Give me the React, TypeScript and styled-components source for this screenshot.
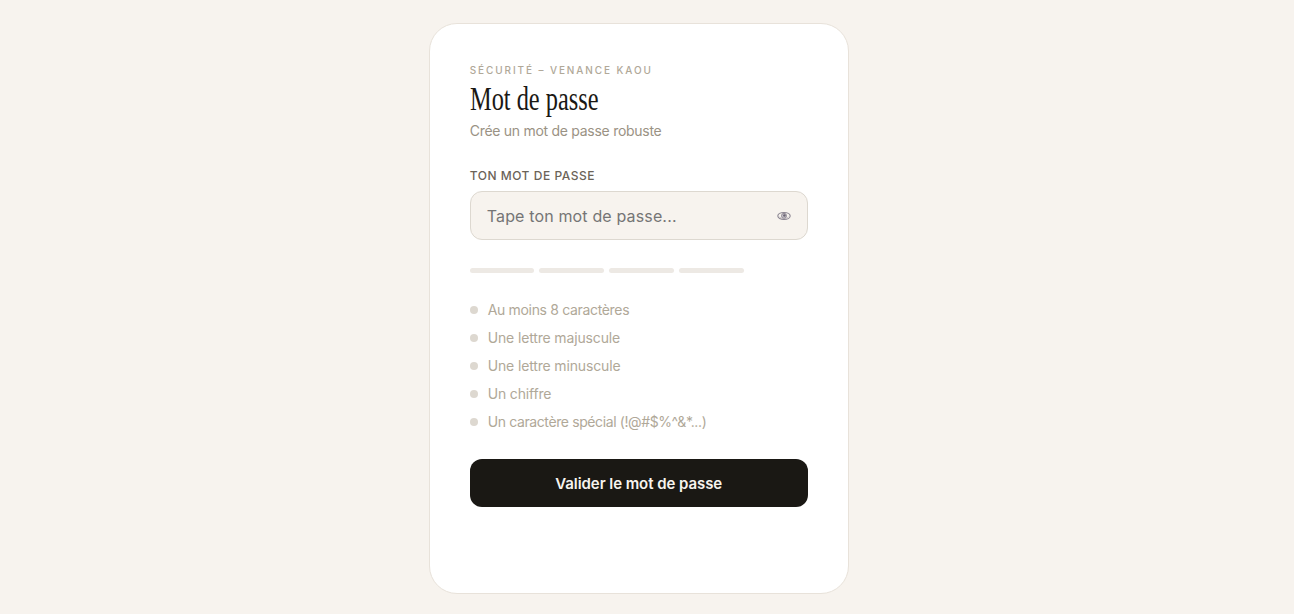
import React, { useState, ChangeEvent } from "react";
import styled, { createGlobalStyle } from "styled-components";

const RULES = [
  { label: "Au moins 8 caractères", spacing: -0.33, test: (v: string) => v.length >= 8 },
  { label: "Une lettre majuscule", spacing: -0.15, test: (v: string) => /[A-Z]/.test(v) },
  { label: "Une lettre minuscule", spacing: -0.15, test: (v: string) => /[a-z]/.test(v) },
  { label: "Un chiffre", spacing: -0.17, test: (v: string) => /[0-9]/.test(v) },
  {
    label: "Un caractère spécial (!@#$%^&*...)",
    spacing: -0.39,
    test: (v: string) => /[^A-Za-z0-9]/.test(v),
  },
];

const LEVELS = [1, 2, 4, 5];

function App() {
  const [password, setPassword] = useState<string>("");
  const [visible, setVisible] = useState<boolean>(false);

  const score = RULES.filter((rule) => rule.test(password)).length;

  const handleChange = (event: ChangeEvent<HTMLInputElement>) => {
    setPassword(event.target.value);
  };

  return (
    <Page>
      <GlobalStyle />
      <Card>
        <Eyebrow>Sécurité – Venance Kaou</Eyebrow>
        <Title>Mot de passe</Title>
        <Subtitle>Crée un mot de passe robuste</Subtitle>

        <Label htmlFor="password">Ton mot de passe</Label>
        <Field>
          <Input
            id="password"
            type={visible ? "text" : "password"}
            placeholder="Tape ton mot de passe..."
            value={password}
            onChange={handleChange}
          />
          <Toggle
            type="button"
            aria-label="Afficher le mot de passe"
            onClick={() => setVisible(!visible)}
          >
            <EyeIcon />
          </Toggle>
        </Field>

        <Strength>
          {LEVELS.map((level) => (
            <Bar key={level} $active={score >= level} />
          ))}
        </Strength>

        <RuleList>
          {RULES.map((rule) => (
            <Rule
              key={rule.label}
              $valid={rule.test(password)}
              $spacing={rule.spacing}
            >
              {rule.label}
            </Rule>
          ))}
        </RuleList>

        <Submit type="button">Valider le mot de passe</Submit>
      </Card>
    </Page>
  );
}

function EyeIcon() {
  return (
    <svg width="14" height="10" viewBox="0 0 14 10" fill="none">
      <ellipse cx="7" cy="5" rx="6.2" ry="3.5" stroke="#8a8490" strokeWidth="1.1" />
      <circle cx="7" cy="4.8" r="2.5" fill="#c9c4cc" stroke="#8b8590" strokeWidth="0.9" />
      <circle cx="7.4" cy="4.5" r="1.3" fill="#6b6472" />
      <path d="M2.6 5.8c1.2 1.3 2.6 1.7 4.4 1.7s3.2-.4 4.4-1.7" stroke="#a29ca6" strokeWidth="0.6" />
    </svg>
  );
}

export default App;

const GlobalStyle = createGlobalStyle`
  * {
    box-sizing: border-box;
  }

  body {
    margin: 0;
    background: #f7f3ee;
    font-family: Inter, "Liberation Sans", sans-serif;
  }
`;

const Page = styled.main`
  display: flex;
  justify-content: center;
  min-height: 614px;
  padding: 23px 16.6px 20px 0;
`;

const Card = styled.section`
  display: flex;
  flex-direction: column;
  width: 420px;
  height: 571px;
  padding: 40px;
  background: #fff;
  border: 1px solid #e8e2da;
  border-radius: 28px;
`;

const Eyebrow = styled.p`
  margin: 0;
  font-size: 10px;
  font-weight: 500;
  line-height: 13px;
  letter-spacing: 1.9px;
  text-transform: uppercase;
  white-space: nowrap;
  color: #b0a898;
`;

const Title = styled.h1`
  width: max-content;
  margin: 4px 0 0;
  font-family: "Liberation Serif", serif;
  font-size: 33px;
  font-weight: 400;
  line-height: 37px;
  color: #1a1814;
  transform: scaleX(0.738);
  transform-origin: left;
`;

const Subtitle = styled.p`
  margin: 3px 0 0;
  font-size: 14px;
  line-height: 20px;
  letter-spacing: -0.28px;
  color: #9a9284;
`;

const Label = styled.label`
  margin-top: 27px;
  font-size: 12px;
  font-weight: 500;
  line-height: 16px;
  letter-spacing: 0.53px;
  text-transform: uppercase;
  color: #6b6358;
`;

const Field = styled.div`
  display: flex;
  align-items: center;
  height: 49px;
  margin-top: 7px;
  padding: 0 16px;
  background: #f7f3ee;
  border: 1px solid #ddd8d0;
  border-radius: 12px;
`;

const Input = styled.input`
  flex: 1;
  min-width: 0;
  padding: 0;
  border: 0;
  outline: 0;
  background: transparent;
  font-family: inherit;
  font-size: 16px;
  letter-spacing: 0.15px;
  color: #1a1814;

  &::placeholder {
    color: #757575;
  }
`;

const Toggle = styled.button`
  display: flex;
  padding: 0;
  border: 0;
  background: none;
  cursor: pointer;
`;

const Strength = styled.div`
  display: flex;
  gap: 5px;
  width: 274px;
  margin-top: 28px;
`;

const Bar = styled.span<{ $active: boolean }>`
  flex: 1;
  height: 5px;
  border-radius: 3px;
  background: ${({ $active }) => ($active ? "#4a9e6b" : "#ede9e4")};
`;

const RuleList = styled.ul`
  display: flex;
  flex-direction: column;
  gap: 8px;
  margin: 27px 0 0;
  padding: 0;
  list-style: none;
`;

const Rule = styled.li<{ $valid: boolean; $spacing: number }>`
  display: flex;
  align-items: center;
  gap: 10px;
  font-size: 14px;
  line-height: 20px;
  letter-spacing: ${({ $spacing }) => $spacing}px;
  color: ${({ $valid }) => ($valid ? "#4a9e6b" : "#b0a898")};

  &::before {
    content: "";
    width: 8px;
    height: 8px;
    border-radius: 50%;
    background: ${({ $valid }) => ($valid ? "#4a9e6b" : "#ddd8d0")};
  }
`;

const Submit = styled.button`
  height: 48px;
  margin-top: 27px;
  border: 0;
  border-radius: 12px;
  background: #1a1814;
  font-family: inherit;
  font-size: 15px;
  font-weight: 600;
  letter-spacing: -0.06px;
  color: #f7f3ee;
  cursor: pointer;
`;
